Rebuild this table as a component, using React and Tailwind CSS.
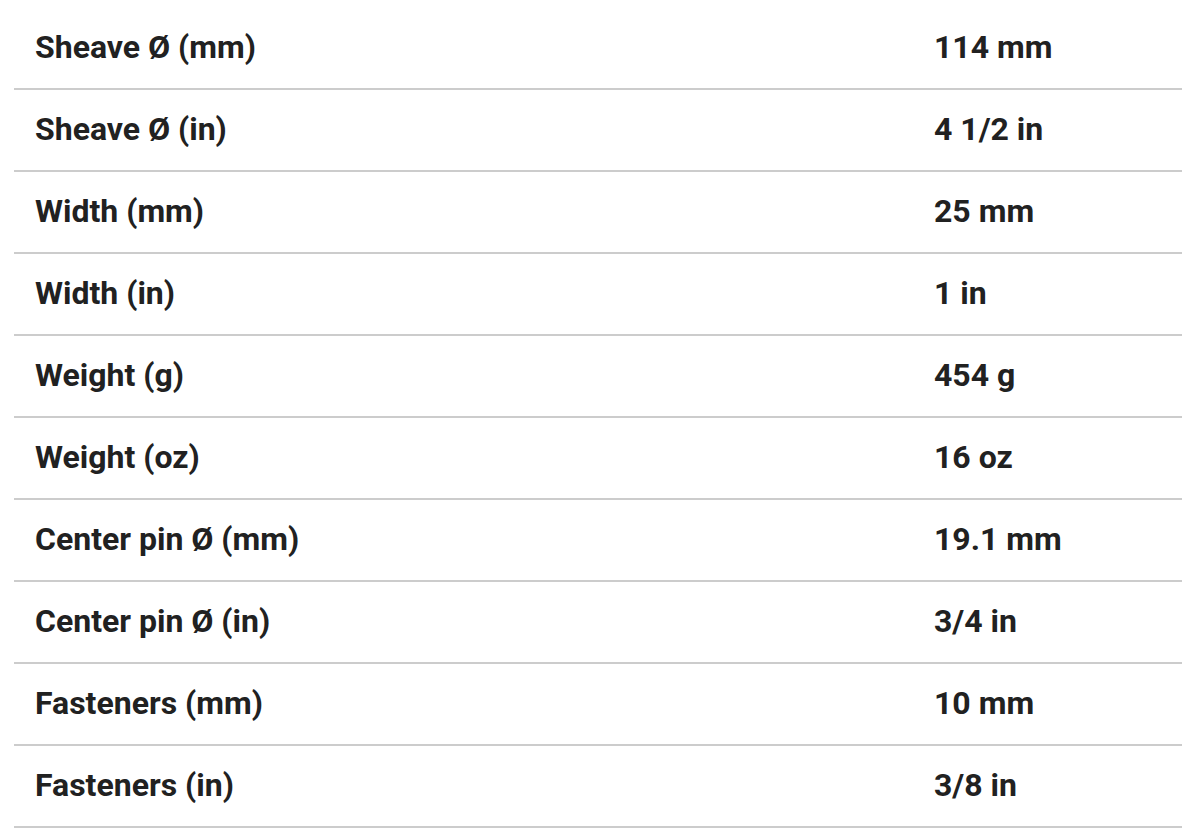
import React from 'react';

const specs = [
  ['Sheave Ø (mm)', '114 mm'],
  ['Sheave Ø (in)', '4 1/2 in'],
  ['Width (mm)', '25 mm'],
  ['Width (in)', '1 in'],
  ['Weight (g)', '454 g'],
  ['Weight (oz)', '16 oz'],
  ['Center pin Ø (mm)', '19.1 mm'],
  ['Center pin Ø (in)', '3/4 in'],
  ['Fasteners (mm)', '10 mm'],
  ['Fasteners (in)', '3/8 in'],
];

const App = () => {
  return (
    <div className="w-[1182px] h-[832px] bg-white overflow-hidden pt-[7px] pl-[14px]">
      <table className="w-[1168px] border-collapse font-['Roboto',sans-serif] text-[32px] font-bold text-[#212121]">
        <tbody>
          {specs.map(([label, value]) => (
            <tr key={label} className="h-[82px] border-b-2 border-[#cccccc]">
              <td className="w-[900px] pl-[21px] pb-[2px] align-middle leading-none">{label}</td>
              <td className="pl-[20px] pb-[2px] align-middle leading-none">{value}</td>
            </tr>
          ))}
        </tbody>
      </table>
    </div>
  );
};

export default App;
